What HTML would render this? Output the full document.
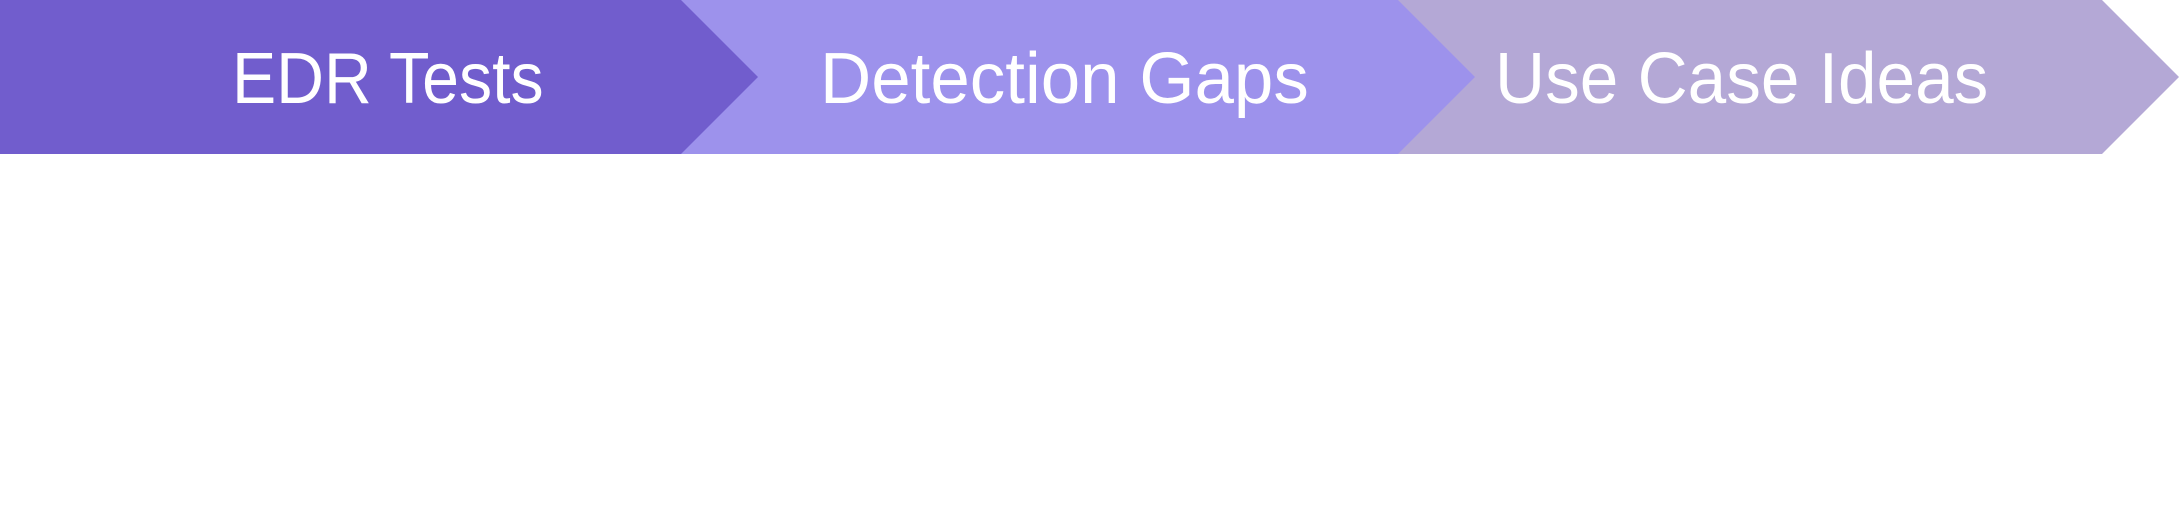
<!DOCTYPE html>
<html><head><style>
html,body{margin:0;padding:0;background:#fff;width:2179px;height:532px;overflow:hidden}
.t{position:absolute;top:43px;font:72px "Liberation Sans",sans-serif;color:#fff;white-space:nowrap;line-height:72px;transform-origin:0 0}
</style></head><body>
<svg width="2179" height="532" style="position:absolute;left:0;top:0">
<polygon points="1398,0 2102,0 2179,77 2102,154 1398,154" fill="#b4a8d6"/>
<polygon points="680,0 1398,0 1475,77 1398,154 680,154" fill="#9d92ec"/>
<polygon points="0,0 681,0 758,77 681,154 0,154" fill="#715dcd"/>
</svg>
<div class="t" style="left:232px;transform:scaleX(0.92)">EDR Tests</div>
<div class="t" style="left:820px;transform:scaleX(0.985)">Detection Gaps</div>
<div class="t" style="left:1495px;transform:scaleX(0.963)">Use Case Ideas</div>
</body></html>
